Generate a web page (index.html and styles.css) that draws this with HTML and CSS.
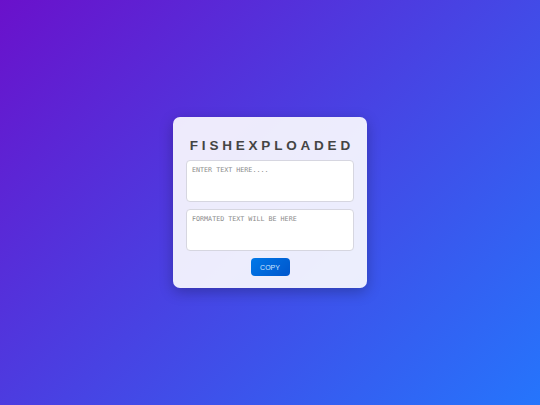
FILE: index.html
```html
<!DOCTYPE html>
<html>
<head>
<meta charset="utf-8">
<link rel="stylesheet" href="styles.css">
</head>
<body>
<div class="card">
  <h1 class="title">FISHEXPLOADED</h1>
  <textarea class="box" placeholder="ENTER TEXT HERE...."></textarea>
  <textarea class="box" placeholder="FORMATED TEXT WILL BE HERE" readonly></textarea>
  <button class="copy">COPY</button>
</div>
</body>
</html>
```
FILE: styles.css
```css
html, body {
  margin: 0;
  height: 100%;
}
body {
  background: linear-gradient(135deg, #6a11cb 0%, #2575fc 100%);
  display: flex;
  align-items: center;
  justify-content: center;
  font-family: "Liberation Sans", Arial, sans-serif;
}
.card {
  width: 194px;
  box-sizing: border-box;
  padding: 21px 13px 12px;
  background: rgba(255, 255, 255, 0.9);
  border-radius: 7px;
  box-shadow: 0 4px 14px rgba(0, 0, 0, 0.25);
  display: flex;
  flex-direction: column;
  align-items: center;
  gap: 7px;
}
.title {
  margin: 0 0 -1px;
  font-size: 13.5px;
  font-weight: bold;
  letter-spacing: 3.8px;
  padding-left: 3.8px;
  color: #444;
  line-height: 16px;
}
.box {
  width: 100%;
  height: 42px;
  box-sizing: border-box;
  border: 1px solid #d6d6e0;
  border-radius: 4px;
  background: #fff;
  padding: 5px 5px;
  font-family: "DejaVu Sans Mono", monospace;
  font-size: 6.7px;
  resize: none;
  outline: none;
}
.box::placeholder {
  color: #8a8a8a;
}
.copy {
  margin-top: 0;
  width: 39px;
  height: 18px;
  border: none;
  border-radius: 4px;
  background: linear-gradient(135deg, #0078e8, #0056cc);
  color: #cfe6ff;
  font-family: "Liberation Sans", Arial, sans-serif;
  font-size: 7px;
  padding: 0;
}
```
